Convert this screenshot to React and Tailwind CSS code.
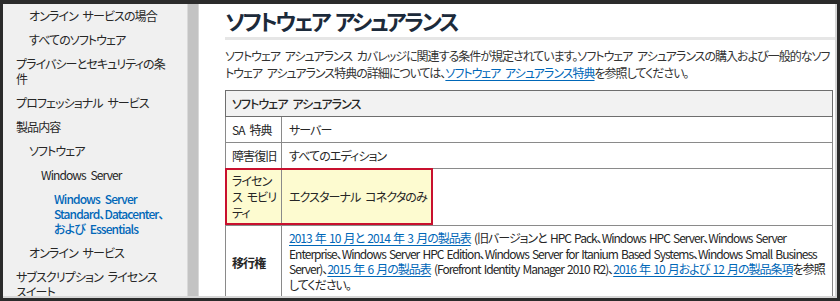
import React from "react";

const FONT = "font-['Noto_Sans_CJK_JP','Noto_Sans',sans-serif] [font-feature-settings:'palt'] tracking-[-0.9px] [word-spacing:3px]";

const NAV = [
  { label: "オンライン サービスの場合", level: 1 },
  { label: "すべてのソフトウェア", level: 1 },
  { label: "プライバシーとセキュリティの条件", level: 0 },
  { label: "プロフェッショナル サービス", level: 0 },
  { label: "製品内容", level: 0 },
  { label: "ソフトウェア", level: 1 },
  { label: "Windows Server", level: 2 },
  { label: "Windows Server Standard、Datacenter、および Essentials", level: 3, active: true },
  { label: "オンライン サービス", level: 1 },
  { label: "サブスクリプション ライセンス スイート", level: 0 },
];

const INDENT = ["pl-[13px]", "pl-[26px]", "pl-[38px]", "pl-[51px]"];

function Sidebar() {
  return (
    <nav className="w-[184px] shrink-0 bg-[#f0f0f0] pt-[4px] pr-[22px] flex flex-col gap-[9px] text-[12px] leading-[15px] text-[#262626]">
      {NAV.map((item) => (
        <a
          key={item.label}
          className={`${INDENT[item.level]} ${item.active ? "text-[#0067b8] font-medium" : ""}`}
        >
          {item.label}
        </a>
      ))}
    </nav>
  );
}

function Link({ children }) {
  return <a className="text-[#0067b8] underline underline-offset-2">{children}</a>;
}

export default function App() {
  return (
    <div className={`w-[840px] h-[301px] bg-[#2b2b2b] pt-[4px] pl-[3px] overflow-hidden ${FONT}`}>
      <div className="flex w-[834px] h-[294px] overflow-hidden border-r-2 border-b-2 border-[#d6d6d6]">
        <Sidebar />

        {/* scrollbar */}
        <div className="w-[12px] shrink-0 bg-[#c3c3c3] border-x border-[#d9d9d9]" />

        <main className="flex-1 bg-white pl-[26px] overflow-hidden">
          <h1 className="mt-[2px] pb-[3px] border-b-[3px] border-[#e6e6e6] text-[22px] leading-[28px] font-bold tracking-[-2.4px] text-[#1c2a3a]">
            ソフトウェア アシュアランス
          </h1>

          <p className="mt-[7px] pr-[2px] text-[12px] leading-[17px] tracking-[-1px] text-[#333]">
            ソフトウェア アシュアランス カバレッジに関連する条件が規定されています。ソフトウェア アシュアランスの購入および一般的なソフトウェア
            アシュアランス特典の詳細については、<Link>ソフトウェア アシュアランス特典</Link>を参照してください。
          </p>

          <table className="mt-[9px] w-[608px] table-fixed border-collapse border border-[#6e6e6e] text-[12px] leading-[16px] text-[#262626]">
            <colgroup>
              <col className="w-[56px]" />
              <col />
            </colgroup>
            <thead>
              <tr className="bg-[#f2f2f2] h-[26px]">
                <th colSpan={2} className="text-left font-medium px-[6px] border border-[#6e6e6e]">
                  ソフトウェア アシュアランス
                </th>
              </tr>
            </thead>
            <tbody>
              <tr className="h-[26px]">
                <td className="pl-[6px] pr-[1px] border border-[#8a8a8a]">SA 特典</td>
                <td className="px-[7px] border border-[#8a8a8a]">サーバー</td>
              </tr>
              <tr className="h-[26px]">
                <td className="pl-[6px] pr-[1px] whitespace-nowrap border border-[#8a8a8a]">障害復旧</td>
                <td className="px-[7px] border border-[#8a8a8a]">すべてのエディション</td>
              </tr>
              <tr className="h-[56px]">
                <td className="relative pl-[6px] pr-[4px] py-[4px] leading-[16px] bg-[#fdfbd0] border border-[#8a8a8a]">
                  ライセンス モビリティ
                  <div className="absolute -left-px -top-px w-[208px] h-[57px] border-2 border-[#c8102e] pointer-events-none" />
                </td>
                <td className="p-0 border border-[#8a8a8a]">
                  <div className="w-[150px] h-[55px] bg-[#fdfbd0] flex items-center px-[7px] whitespace-nowrap">
                    エクスターナル コネクタのみ
                  </div>
                </td>
              </tr>
              <tr>
                <td className="pl-[6px] pr-[1px] font-semibold border border-[#8a8a8a]">移行権</td>
                <td className="px-[7px] pt-[4px] pb-[8px] leading-[15.5px] tracking-[-1px] [word-spacing:1.5px] border border-[#8a8a8a]">
                  <Link>2013 年 10 月と 2014 年 3 月の製品表</Link> (旧バージョンと HPC Pack、Windows HPC Server、Windows Server
                  Enterprise、Windows Server HPC Edition、Windows Server for Itanium Based Systems、Windows Small Business
                  Server)、<Link>2015 年 6 月の製品表</Link> (Forefront Identity Manager 2010 R2)、
                  <Link>2016 年 10 月および 12 月の製品条項</Link>を参照してください。
                </td>
              </tr>
            </tbody>
          </table>
        </main>
      </div>
    </div>
  );
}
